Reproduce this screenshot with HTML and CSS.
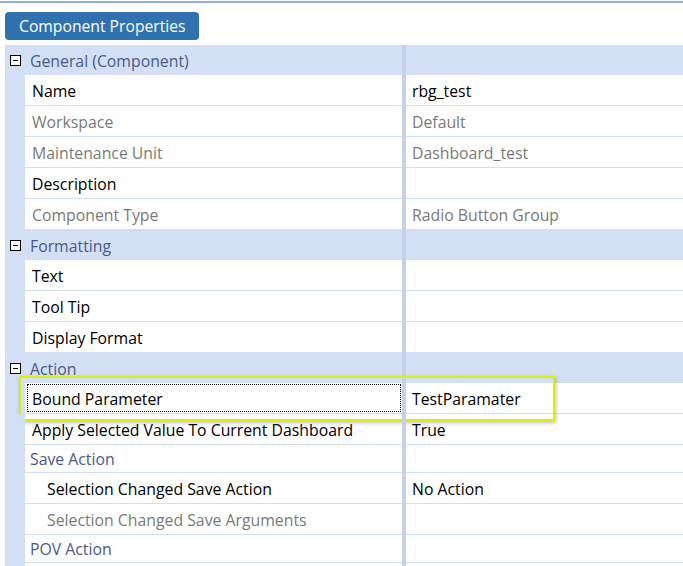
FILE: index.html
```html
<!DOCTYPE html>
<html>
<head>
<meta charset="utf-8">
<link rel="stylesheet" href="styles.css">
</head>
<body>
<div class="topline"></div>
<div class="toolbar"><div class="btn">Component Properties</div></div>
<div class="grid">
  <div class="row head"><div class="gut"><span class="minus"></span></div><div class="name">General (Component)</div><div class="sep"></div><div class="val"></div></div>
  <div class="row"><div class="gut"></div><div class="name">Name</div><div class="sep"></div><div class="val">rbg_test</div></div>
  <div class="row ro"><div class="gut"></div><div class="name">Workspace</div><div class="sep"></div><div class="val">Default</div></div>
  <div class="row ro"><div class="gut"></div><div class="name">Maintenance Unit</div><div class="sep"></div><div class="val">Dashboard_test</div></div>
  <div class="row"><div class="gut"></div><div class="name">Description</div><div class="sep"></div><div class="val"></div></div>
  <div class="row ro"><div class="gut"></div><div class="name">Component Type</div><div class="sep"></div><div class="val">Radio Button Group</div></div>
  <div class="row head"><div class="gut"><span class="minus"></span></div><div class="name">Formatting</div><div class="sep"></div><div class="val"></div></div>
  <div class="row"><div class="gut"></div><div class="name">Text</div><div class="sep"></div><div class="val"></div></div>
  <div class="row"><div class="gut"></div><div class="name">Tool Tip</div><div class="sep"></div><div class="val"></div></div>
  <div class="row"><div class="gut"></div><div class="name">Display Format</div><div class="sep"></div><div class="val"></div></div>
  <div class="row head"><div class="gut"><span class="minus"></span></div><div class="name">Action</div><div class="sep"></div><div class="val"></div></div>
  <div class="row sel"><div class="gut"></div><div class="name"><span class="focus">Bound Parameter</span></div><div class="sep"></div><div class="val">TestParamater</div><div class="hl"></div></div>
  <div class="row"><div class="gut"></div><div class="name">Apply Selected Value To Current Dashboard</div><div class="sep"></div><div class="val">True</div></div>
  <div class="row sub"><div class="gut"></div><div class="name">Save Action</div><div class="sep"></div><div class="val"></div></div>
  <div class="row ind"><div class="gut"></div><div class="name">Selection Changed Save Action</div><div class="sep"></div><div class="val">No Action</div></div>
  <div class="row ind ro"><div class="gut"></div><div class="name">Selection Changed Save Arguments</div><div class="sep"></div><div class="val"></div></div>
  <div class="row sub"><div class="gut"></div><div class="name">POV Action</div><div class="sep"></div><div class="val"></div></div>
  <div class="row"><div class="gut"></div><div class="name"></div><div class="sep"></div><div class="val"></div></div>
</div>
</body>
</html>
```
FILE: styles.css
```css
html, body {
  margin: 0;
  padding: 0;
  background: #ffffff;
  overflow: hidden;
}
body {
  font-family: "Open Sans", "Noto Sans", sans-serif;
  font-size: 15.8px;
  color: #000000;
}
.topline {
  margin-top: 1px;
  height: 2px;
  background: #94ade0;
}
.toolbar {
  padding: 9px 0 5px 5px;
}
.btn {
  display: inline-flex;
  align-items: center;
  height: 28px;
  width: 194px;
  box-sizing: border-box;
  padding-left: 14px;
  background: #3071b0;
  color: #ffffff;
  border-radius: 4px;
  font-size: 15.7px;
}
.grid {
  margin-left: 5px;
}
.row {
  display: flex;
  height: 31px;
  position: relative;
}
.gut {
  width: 20px;
  flex: none;
  background: #d3dff5;
  display: flex;
  align-items: center;
  justify-content: center;
}
.name {
  width: 377px;
  flex: none;
  box-sizing: border-box;
  padding-left: 7px;
  padding-top: 1px;
  display: flex;
  align-items: center;
  border-bottom: 1px solid #d3dff5;
  white-space: nowrap;
}
.sep {
  width: 4px;
  flex: none;
  background: #c3d1ea;
}
.val {
  flex: 1;
  box-sizing: border-box;
  padding-left: 6px;
  padding-top: 1px;
  display: flex;
  align-items: center;
  border-bottom: 1px solid #d3dff5;
  white-space: nowrap;
}
.ro .name, .ro .val {
  color: #7a7a7a;
}
.head {
  height: 30px;
  background: #d3dff5;
}
.head .name {
  padding-left: 5px;
  border-bottom: none;
  color: #4a5a86;
}
.head .val {
  border-bottom: none;
}
.minus {
  width: 9px;
  height: 9px;
  border: 1px solid #000;
  position: relative;
  background: #fff;
  margin-left: 1px;
}
.minus::after {
  content: "";
  position: absolute;
  left: 2px;
  right: 2px;
  top: 4px;
  height: 1px;
  background: #000;
}
.sub {
  height: 28px;
}
.sub .name {
  padding-left: 5px;
  color: #4a5a86;
}
.ind .name {
  padding-left: 22px;
}
.sel .name {
  padding-left: 2px;
  padding-top: 0;
}
.focus {
  flex: 1;
  align-self: stretch;
  margin: 1px 1px 1px 0;
  display: flex;
  align-items: center;
  padding-left: 4px;
  padding-top: 1px;
  border: 1px dotted #000;
}
.hl {
  position: absolute;
  left: 14px;
  top: -7px;
  width: 536px;
  height: 45px;
  box-sizing: border-box;
  border: 2px solid #dcef00;
  box-shadow: 1px 2px 4px rgba(0, 0, 0, 0.25);
  pointer-events: none;
}
```
